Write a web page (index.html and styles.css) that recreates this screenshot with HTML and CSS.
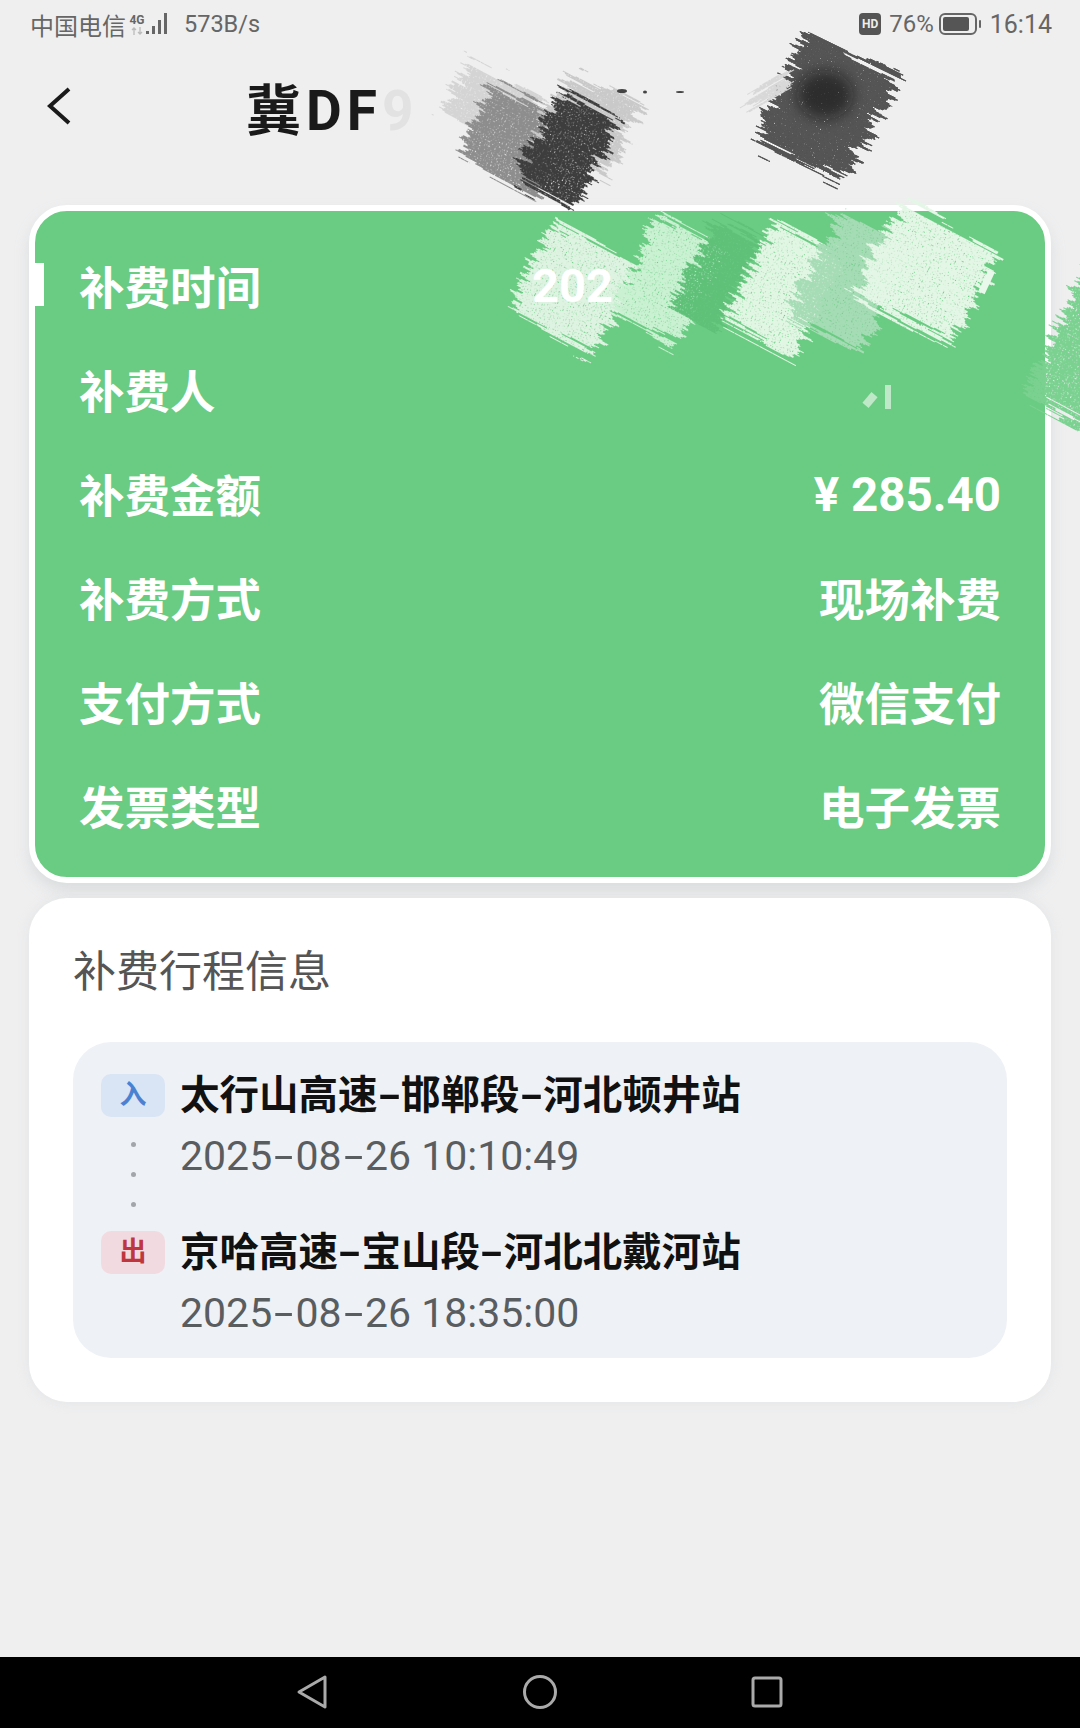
FILE: index.html
```html
<!DOCTYPE html>
<html lang="zh-CN">
<head>
    <meta charset="UTF-8" />
    <meta name="viewport" content="width=device-width, initial-scale=1.0" />
    <title>补费详情</title>
    <link rel="stylesheet" href="styles.css">
</head>
<body>
    <div class="status-bar">
        <div class="status-left">
            <span>中国电信</span>
            <div class="net-type">
                <span>4G</span>
                <svg width="12" height="8" viewBox="0 0 12 8">
                    <path d="M3 8 V1 M1 3 L3 1 L5 3 M9 0 V7 M7 5 L9 7 L11 5" fill="none" stroke="#bbb" stroke-width="1.3" />
                </svg>
            </div>
            <svg class="signal" width="23" height="24" viewBox="0 0 23 24">
                <rect x="0" y="19" width="3" height="3" fill="#666" />
                <rect x="6" y="14" width="3" height="8" fill="#666" />
                <rect x="12" y="8" width="3" height="14" fill="#666" />
                <rect x="18" y="1" width="3" height="21" fill="#666" />
            </svg>
            <span class="speed">573B/s</span>
        </div>
        <div class="status-right">
            <span class="hd-badge">HD</span>
            <span class="battery-pct">76%</span>
            <svg class="battery" width="43" height="22" viewBox="0 0 43 22">
                <rect x="1" y="1" width="36" height="20" rx="5" fill="none" stroke="#666" stroke-width="2" />
                <rect x="4" y="4" width="26" height="14" rx="2" fill="#555" />
                <rect x="40" y="7" width="2" height="8" rx="1" fill="#666" />
            </svg>
            <span class="clock">16:14</span>
        </div>
    </div>

    <div class="title-bar">
        <svg class="back-icon" width="26" height="40" viewBox="0 0 26 40">
            <path d="M23 3 L4 20 L23 37" fill="none" stroke="#1a1a1a" stroke-width="4" />
        </svg>
        <h1 class="plate">冀DF<span class="plate-fade">9</span></h1>
    </div>

    <section class="pay-card">
        <div class="pay-row pay-row-active">
            <span>补费时间</span>
            <span class="time-cut">202</span>
        </div>
        <div class="pay-row"><span>补费人</span></div>
        <div class="pay-row"><span>补费金额</span><span class="amount">¥ 285.40</span></div>
        <div class="pay-row"><span>补费方式</span><span>现场补费</span></div>
        <div class="pay-row"><span>支付方式</span><span>微信支付</span></div>
        <div class="pay-row"><span>发票类型</span><span>电子发票</span></div>
    </section>

    <section class="trip-card">
        <h2 class="trip-title">补费行程信息</h2>
        <div class="trip-box">
            <div class="stop stop-in">
                <div class="stop-mark">
                    <span class="badge badge-in">入</span>
                    <i class="dot"></i>
                    <i class="dot"></i>
                    <i class="dot"></i>
                </div>
                <div class="stop-info">
                    <div class="stop-name">太行山高速<span class="dash">-</span>邯郸段<span class="dash">-</span>河北顿井站</div>
                    <div class="stop-date">2025<span class="dash">-</span>08<span class="dash">-</span>26 10:10:49</div>
                </div>
            </div>
            <div class="stop">
                <div class="stop-mark">
                    <span class="badge badge-out">出</span>
                </div>
                <div class="stop-info">
                    <div class="stop-name">京哈高速<span class="dash">-</span>宝山段<span class="dash">-</span>河北北戴河站</div>
                    <div class="stop-date">2025<span class="dash">-</span>08<span class="dash">-</span>26 18:35:00</div>
                </div>
            </div>
        </div>
    </section>

    <nav class="nav-bar">
        <svg width="32" height="36" viewBox="0 0 32 36">
            <path d="M29 3 L3 18 L29 33 Z" fill="none" stroke="#aaa" stroke-width="3" stroke-linejoin="round" />
        </svg>
        <svg width="36" height="36" viewBox="0 0 36 36">
            <circle cx="18" cy="18" r="15.5" fill="none" stroke="#aaa" stroke-width="3" />
        </svg>
        <svg width="32" height="32" viewBox="0 0 32 32">
            <rect x="2" y="2" width="28" height="28" rx="2" fill="none" stroke="#aaa" stroke-width="3" />
        </svg>
    </nav>

    <!-- hand scribbles lying over the private data -->
    <svg class="scribbles" width="1080" height="1728" viewBox="0 0 1080 1728">
        <defs>
            <filter id="scrub" x="-30%" y="-30%" width="160%" height="160%">
                <feTurbulence type="fractalNoise" baseFrequency="0.012 0.28" numOctaves="2" seed="4" result="streaks" />
                <feDisplacementMap in="SourceGraphic" in2="streaks" scale="40" xChannelSelector="R" yChannelSelector="G" result="rough" />
                <feTurbulence type="fractalNoise" baseFrequency="0.75" numOctaves="1" seed="9" result="noise" />
                <feColorMatrix in="noise" type="matrix" values="0 0 0 0 0  0 0 0 0 0  0 0 0 0 0  0 0 0 -6 4.6" result="grain" />
                <feComposite in="rough" in2="grain" operator="in" />
            </filter>
            <filter id="soft" x="-50%" y="-50%" width="200%" height="200%">
                <feGaussianBlur stdDeviation="7" />
            </filter>
        </defs>

        <!-- title bar -->
        <rect filter="url(#scrub)" transform="rotate(28 490 105)" x="450" y="75" width="85" height="60" fill="#d4d4d4" />
        <rect filter="url(#scrub)" transform="rotate(28 515 140)" x="470" y="100" width="95" height="80" fill="#8d8d8d" />
        <rect filter="url(#scrub)" transform="rotate(28 590 120)" x="550" y="85" width="80" height="80" fill="#c9c9c9" />
        <rect filter="url(#scrub)" transform="rotate(28 570 150)" x="535" y="100" width="65" height="100" fill="#3c3c3c" />
        <rect filter="url(#scrub)" transform="rotate(26 825 110)" x="775" y="50" width="100" height="118" fill="#2e2e2e" />
        <rect filter="url(#scrub)" transform="rotate(26 825 110)" x="775" y="50" width="100" height="118" fill="#555" />
        <ellipse cx="825" cy="95" rx="28" ry="24" fill="#111" opacity="0.55" filter="url(#soft)" />
        <rect filter="url(#scrub)" transform="rotate(-30 770 90)" x="745" y="84" width="45" height="12" fill="#d8d8d8" />
        <g fill="#444">
            <ellipse cx="622" cy="91" rx="5" ry="2" />
            <ellipse cx="645" cy="92" rx="2" ry="1.5" />
            <ellipse cx="680" cy="92" rx="4" ry="1" />
        </g>

        <!-- green card -->
        <rect filter="url(#scrub)" transform="rotate(28 572 290)" x="524" y="238" width="96" height="102" fill="#def3e1" />
        <rect filter="url(#scrub)" transform="rotate(28 668 280)" x="630" y="226" width="76" height="108" fill="#c9f1d2" />
        <rect filter="url(#scrub)" transform="rotate(28 716 275)" x="690" y="226" width="52" height="98" fill="#5ec078" />
        <rect filter="url(#scrub)" transform="rotate(28 785 288)" x="745" y="232" width="80" height="114" fill="#e2f6e4" />
        <rect filter="url(#scrub)" transform="rotate(28 850 283)" x="810" y="224" width="80" height="118" fill="#a6dcb5" />
        <rect filter="url(#scrub)" transform="rotate(28 925 275)" x="868" y="222" width="114" height="104" fill="#e4f7e6" />
        <rect transform="rotate(25 987 282)" x="983" y="270" width="7" height="24" fill="#e8f8ea" />
        <g fill="#bfe8c8">
            <rect x="866" y="393" width="8" height="14" transform="rotate(40 870 400)" />
            <rect x="885" y="385" width="6" height="24" />
        </g>
        <rect filter="url(#scrub)" transform="rotate(28 1090 345)" x="1052" y="270" width="76" height="150" fill="#7ad190" />
    </svg>
</body>
</html>
```

FILE: styles.css
```css
* {
    box-sizing: border-box;
}
body {
    margin: 0;
    height: 100vh;
    display: flex;
    flex-direction: column;
    position: relative;
    overflow: hidden;
    background: #efeff0;
    font-family: Roboto, "Noto Sans CJK SC", sans-serif;
}

/* status bar */
.status-bar {
    height: 48px;
    padding: 0 28px 0 30px;
    display: flex;
    justify-content: space-between;
    align-items: center;
    font-size: 24px;
    color: #666;
}
.status-left,
.status-right {
    display: flex;
    align-items: center;
}
.net-type {
    width: 18px;
    margin-left: 2px;
    display: flex;
    flex-direction: column;
    align-items: center;
    font-size: 12px;
    font-weight: 700;
    line-height: 14px;
}
.speed {
    margin-left: 15px;
    font-size: 23.5px;
}
.hd-badge {
    width: 22px;
    height: 22px;
    border-radius: 4px;
    background: #555;
    color: #eee;
    font-size: 12px;
    font-weight: 700;
    line-height: 22px;
    text-align: center;
}
.battery-pct {
    margin-left: 8px;
}
.battery {
    margin-left: 5px;
}
.clock {
    margin-left: 8px;
    font-size: 25px;
}

/* title */
.title-bar {
    height: 157px;
    padding: 0 0 42px 46px;
    display: flex;
    align-items: center;
}
.plate {
    margin: 0 0 0 174px;
    font-size: 55px;
    font-weight: 700;
    color: #1a1a1a;
    letter-spacing: 5px;
}
.plate-fade {
    color: #e2e2e2;
}

/* green card */
.pay-card {
    margin: 0 29px;
    padding: 22px 0 20px;
    border: 6px solid #fff;
    border-radius: 38px;
    background: #6acb82;
    box-shadow: 0 8px 14px rgba(180, 190, 190, 0.35);
    color: #fff;
    font-size: 45.5px;
    font-weight: 700;
}
.pay-row {
    height: 104px;
    padding: 0 44px 0 44px;
    display: flex;
    justify-content: space-between;
    align-items: center;
    position: relative;
}
.pay-row-active::before {
    content: "";
    position: absolute;
    left: 0;
    top: 30px;
    width: 9px;
    height: 43px;
    background: #fff;
}
/* stays readable on top of the scribble */
.time-cut {
    position: relative;
    z-index: 1;
    margin-right: 388px;
    font-size: 47px;
}
.amount {
    margin-top: 4px;
    font-size: 47.5px;
}

/* trip card */
.trip-card {
    margin: 15px 29px 0;
    padding: 48px 44px 44px;
    border-radius: 38px;
    background: #fff;
    box-shadow: 0 0 12px rgba(200, 205, 205, 0.3);
}
.trip-title {
    margin: 0;
    font-size: 43px;
    line-height: 52px;
    font-weight: 400;
    color: #555;
}
.trip-box {
    margin-top: 44px;
    height: 316px;
    padding: 30px 28px 0;
    border-radius: 38px;
    background: #eef1f6;
}
.stop {
    display: flex;
    gap: 15px;
}
.stop-in {
    height: 157px;
}
.stop-mark {
    width: 64px;
    padding-top: 2px;
    display: flex;
    flex-direction: column;
    align-items: center;
    gap: 25px;
}
.badge {
    width: 64px;
    height: 43px;
    border-radius: 10px;
    font-size: 27px;
    font-weight: 700;
    line-height: 43px;
    text-align: center;
}
.badge-in {
    background: #d9e5f4;
    color: #4a82d2;
}
.badge-out {
    background: #f2dbe0;
    color: #c0363f;
}
.dot {
    width: 5px;
    height: 5px;
    border-radius: 50%;
    background: #a2a6ab;
}
.dash {
    display: inline-block;
    transform: scaleX(1.7);
}
.stop-name {
    font-size: 39.5px;
    line-height: 48px;
    font-weight: 700;
    color: #111;
}
.stop-name .dash {
    margin: 0 4px;
}
.stop-date {
    margin-top: 12px;
    font-size: 41px;
    line-height: 48px;
    color: #5a5d60;
}
.stop-date .dash {
    margin: 0 6px;
}

/* nav bar */
.nav-bar {
    height: 71px;
    margin-top: auto;
    position: relative;
    background: #000;
}
.nav-bar svg {
    position: absolute;
    top: 17px;
}
.nav-bar svg:nth-child(1) {
    left: 296px;
}
.nav-bar svg:nth-child(2) {
    left: 522px;
}
.nav-bar svg:nth-child(3) {
    left: 751px;
    top: 19px;
}

.scribbles {
    position: absolute;
    left: 0;
    top: 0;
    pointer-events: none;
}
```
